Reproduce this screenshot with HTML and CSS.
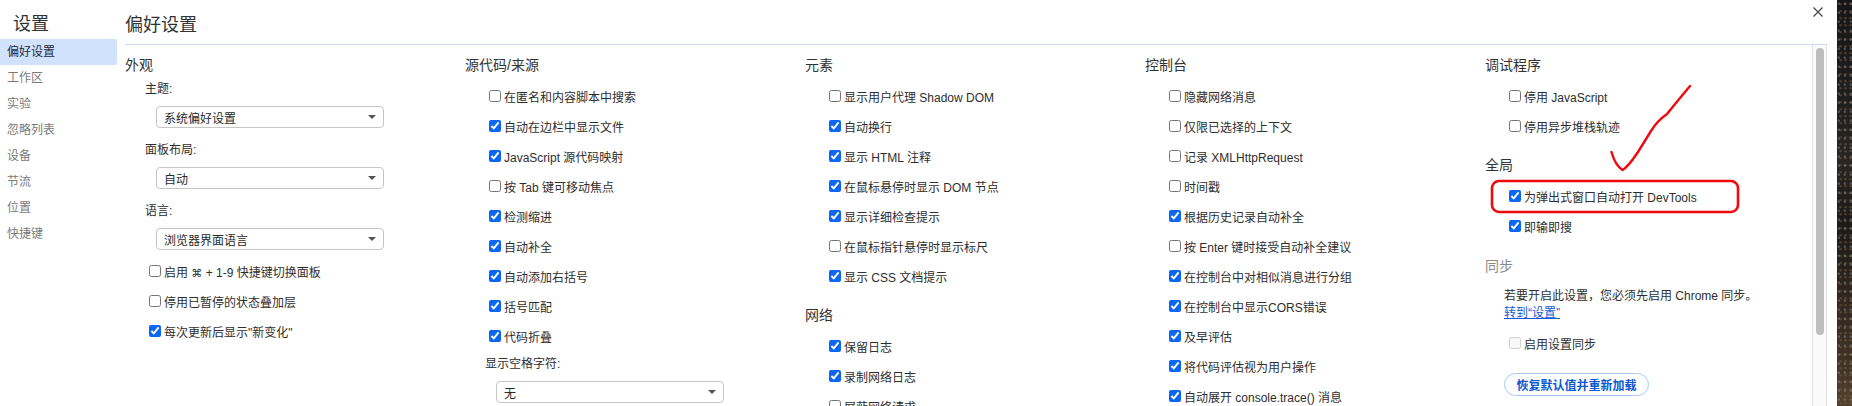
FILE: index.html
```html
<!DOCTYPE html>
<html lang="zh-CN">
<head>
<meta charset="utf-8">
<title>设置</title>
<link rel="stylesheet" href="styles.css">
</head>
<body>
<div class="screen">
  <div class="dialog">
    <aside class="sidebar">
      <div class="sidebar-title">设置</div>
      <div class="nav-item active">偏好设置</div>
      <div class="nav-item">工作区</div>
      <div class="nav-item">实验</div>
      <div class="nav-item">忽略列表</div>
      <div class="nav-item">设备</div>
      <div class="nav-item">节流</div>
      <div class="nav-item">位置</div>
      <div class="nav-item">快捷键</div>
    </aside>
    <main class="main">
      <header class="header">
        <div class="header-title">偏好设置</div>
        <svg class="close" width="10" height="10" viewBox="0 0 10 10"><path d="M0.5 0.5L9.5 9.5M9.5 0.5L0.5 9.5" stroke="#4a4a4a" stroke-width="1.3" fill="none"/></svg>
      </header>
      <div class="body">
        <div class="columns">
          <section class="col">
            <div class="section-title">外观</div>
            <div class="field">
              <div class="field-label">主题:</div>
              <div class="select"><span>系统偏好设置</span><i class="arrow"></i></div>
            </div>
            <div class="field">
              <div class="field-label">面板布局:</div>
              <div class="select"><span>自动</span><i class="arrow"></i></div>
            </div>
            <div class="field">
              <div class="field-label">语言:</div>
              <div class="select"><span>浏览器界面语言</span><i class="arrow"></i></div>
            </div>
            <div class="rows">
              <label class="row"><input type="checkbox"><span>启用 <span class="cmd">⌘</span> + 1-9 快捷键切换面板</span></label>
              <label class="row"><input type="checkbox"><span>停用已暂停的状态叠加层</span></label>
              <label class="row"><input type="checkbox" checked><span>每次更新后显示"新变化"</span></label>
            </div>
          </section>
          <section class="col">
            <div class="section-title">源代码/来源</div>
            <label class="row"><input type="checkbox"><span>在匿名和内容脚本中搜索</span></label>
            <label class="row"><input type="checkbox" checked><span>自动在边栏中显示文件</span></label>
            <label class="row"><input type="checkbox" checked><span>JavaScript 源代码映射</span></label>
            <label class="row"><input type="checkbox"><span>按 Tab 键可移动焦点</span></label>
            <label class="row"><input type="checkbox" checked><span>检测缩进</span></label>
            <label class="row"><input type="checkbox" checked><span>自动补全</span></label>
            <label class="row"><input type="checkbox" checked><span>自动添加右括号</span></label>
            <label class="row"><input type="checkbox" checked><span>括号匹配</span></label>
            <label class="row"><input type="checkbox" checked><span>代码折叠</span></label>
            <div class="field field-after-rows">
              <div class="field-label">显示空格字符:</div>
              <div class="select"><span>无</span><i class="arrow"></i></div>
            </div>
          </section>
          <section class="col">
            <div class="section-title">元素</div>
            <label class="row"><input type="checkbox"><span>显示用户代理 Shadow DOM</span></label>
            <label class="row"><input type="checkbox" checked><span>自动换行</span></label>
            <label class="row"><input type="checkbox" checked><span>显示 HTML 注释</span></label>
            <label class="row"><input type="checkbox" checked><span>在鼠标悬停时显示 DOM 节点</span></label>
            <label class="row"><input type="checkbox" checked><span>显示详细检查提示</span></label>
            <label class="row"><input type="checkbox"><span>在鼠标指针悬停时显示标尺</span></label>
            <label class="row"><input type="checkbox" checked><span>显示 CSS 文档提示</span></label>
            <div class="section-title later">网络</div>
            <label class="row"><input type="checkbox" checked><span>保留日志</span></label>
            <label class="row"><input type="checkbox" checked><span>录制网络日志</span></label>
            <label class="row"><input type="checkbox"><span>屏蔽网络请求</span></label>
          </section>
          <section class="col">
            <div class="section-title">控制台</div>
            <label class="row"><input type="checkbox"><span>隐藏网络消息</span></label>
            <label class="row"><input type="checkbox"><span>仅限已选择的上下文</span></label>
            <label class="row"><input type="checkbox"><span>记录 XMLHttpRequest</span></label>
            <label class="row"><input type="checkbox"><span>时间戳</span></label>
            <label class="row"><input type="checkbox" checked><span>根据历史记录自动补全</span></label>
            <label class="row"><input type="checkbox"><span>按 Enter 键时接受自动补全建议</span></label>
            <label class="row"><input type="checkbox" checked><span>在控制台中对相似消息进行分组</span></label>
            <label class="row"><input type="checkbox" checked><span>在控制台中显示CORS错误</span></label>
            <label class="row"><input type="checkbox" checked><span>及早评估</span></label>
            <label class="row"><input type="checkbox" checked><span>将代码评估视为用户操作</span></label>
            <label class="row"><input type="checkbox" checked><span>自动展开 console.trace() 消息</span></label>
          </section>
          <section class="col">
            <div class="section-title">调试程序</div>
            <label class="row"><input type="checkbox"><span>停用 JavaScript</span></label>
            <label class="row"><input type="checkbox"><span>停用异步堆栈轨迹</span></label>
            <div class="section-title later">全局</div>
            <label class="row"><input type="checkbox" checked><span>为弹出式窗口自动打开 DevTools</span></label>
            <label class="row"><input type="checkbox" checked><span>即输即搜</span></label>
            <div class="section-title later muted sync-title">同步</div>
            <p class="sync-note">若要开启此设置，您必须先启用 Chrome 同步。<br><a href="#" class="link">转到“设置”</a></p>
            <label class="row sync-row"><input type="checkbox" disabled><span>启用设置同步</span></label>
            <div class="btn-wrap"><button class="reset-btn">恢复默认值并重新加载</button></div>
          </section>
        </div>
        <div class="scrollbar"><div class="thumb"></div></div>
      </div>
    </main>
  </div>
  <div class="wallpaper"></div>
  <svg class="annotation" width="1852" height="406" viewBox="0 0 1852 406">
    <rect x="1492" y="181" width="246" height="31" rx="7" ry="7" fill="none" stroke="#ee0a0f" stroke-width="2.6"/>
    <path d="M1611.5 152 Q1615 165 1622.5 170 Q1628 167 1638 152 Q1646 139 1651 131 Q1657 121 1667 114 Q1675 104 1690 86" fill="none" stroke="#ee0a0f" stroke-width="2.4" stroke-linecap="round" stroke-linejoin="round"/>
  </svg>
</div>
</body>
</html>
```
FILE: styles.css
```css
* {
  box-sizing: border-box;
}

html,
body {
  margin: 0;
  padding: 0;
}

body {
  width: 1852px;
  height: 406px;
  overflow: hidden;
  background: #ffffff;
  font-family: "Liberation Sans", "Noto Sans CJK SC", sans-serif;
  font-size: 12px;
  color: #2e2e2e;
}

.screen {
  position: relative;
  display: flex;
  height: 406px;
}

.dialog {
  width: 1837px;
  flex: none;
  display: flex;
  background: #ffffff;
}

/* Sidebar */
.sidebar {
  width: 117px;
  flex: none;
  margin-right: 8px;
}

.sidebar-title {
  padding: 12px 0 3px 13px;
  font-size: 18px;
  line-height: 24px;
  color: #333333;
}

.nav-item {
  height: 26px;
  line-height: 26px;
  padding-left: 7px;
  font-size: 12px;
  color: #7a7a7a;
}

.nav-item.active {
  background: #d1e2fc;
  color: #1d2b44;
}

/* Main */
.main {
  width: 1702px;
  flex: none;
  display: flex;
  flex-direction: column;
}

.header {
  height: 45px;
  flex: none;
  display: flex;
  align-items: flex-start;
  padding-top: 13px;
  border-bottom: 1px solid #cadcf8;
}

.header-title {
  font-size: 18px;
  line-height: 24px;
  color: #333333;
}

.close {
  margin-left: auto;
  margin-top: -6px;
  margin-right: 4px;
}

.body {
  flex: 1;
  min-height: 0;
  display: flex;
}

.columns {
  flex: 1;
  min-width: 0;
  display: grid;
  grid-template-columns: repeat(4, 340px) 1fr;
  align-items: start;
  overflow: hidden;
}

.col {
  padding-top: 10px;
}

.section-title {
  font-size: 14px;
  line-height: 20px;
  color: #333333;
  margin-bottom: 6px;
}

.section-title.later {
  margin-top: 14px;
}

.section-title.muted {
  color: #8a8a8a;
}

.section-title.sync-title {
  margin-top: 15px;
}

.row {
  height: 30px;
  display: flex;
  align-items: center;
  gap: 3px;
  padding-left: 24px;
  white-space: nowrap;
  color: #2e2e2e;
}

.row input {
  width: 12px;
  height: 12px;
  margin: 0;
  flex: none;
  accent-color: #0b66f3;
}

.cmd {
  font-family: "DejaVu Sans", sans-serif;
  font-size: 11px;
}

.rows {
  margin-top: 6px;
}

.field {
  margin-top: 6px;
}

.field + .field {
  margin-top: 14px;
}

.field-after-rows {
  margin-top: 5px;
}

.field-label {
  padding-left: 20px;
  line-height: 16px;
}

.select {
  margin-top: 9px;
  margin-left: 31px;
  width: 228px;
  height: 22px;
  border: 1px solid #c6c6c6;
  border-radius: 4px;
  background: #ffffff;
  display: flex;
  align-items: center;
  justify-content: space-between;
  padding: 0 7px 0 7px;
  color: #2a2a2a;
}

.arrow {
  width: 0;
  height: 0;
  border-left: 4px solid transparent;
  border-right: 4px solid transparent;
  border-top: 4px solid #555555;
}

.sync-note {
  margin: 12px 0 0 0;
  padding-left: 19px;
  line-height: 17px;
  color: #2e2e2e;
}

.link {
  color: #1558d6;
  text-decoration: underline;
}

.sync-row {
  margin-top: 6px;
}

.btn-wrap {
  margin-top: 15px;
  padding-left: 19px;
}

.reset-btn {
  width: 145px;
  height: 23px;
  border: 1px solid #a9c8f7;
  border-radius: 12px;
  background: #ffffff;
  color: #0b57d0;
  font-family: "Liberation Sans", "Noto Sans CJK SC", sans-serif;
  font-size: 12px;
  font-weight: 600;
  padding: 0;
}

/* Scrollbar */
.scrollbar {
  width: 15px;
  flex: none;
  border-left: 1px solid #e2e2e2;
  border-right: 1px solid #e2e2e2;
  background: #fafafa;
  padding: 3px 0 0 3px;
}

.thumb {
  width: 8px;
  height: 287px;
  border-radius: 4px;
  background: #bdbdbd;
}

/* Desktop wallpaper strip */
.wallpaper {
  flex: 1;
  background:
    radial-gradient(circle at 30% 40%, rgba(170, 170, 170, 0.35) 0 1px, transparent 1.5px) 0 0 / 6px 9px,
    radial-gradient(circle at 70% 60%, rgba(120, 100, 80, 0.45) 0 1px, transparent 1.5px) 0 0 / 5px 7px,
    linear-gradient(180deg, #161616 0%, #1f1f1f 25%, #2a2521 40%, #1c1a18 55%, #2f261f 72%, #3f3124 88%, #54402c 100%);
}

/* Red hand-drawn annotation overlay */
.annotation {
  position: absolute;
  left: 0;
  top: 0;
  pointer-events: none;
}
```
